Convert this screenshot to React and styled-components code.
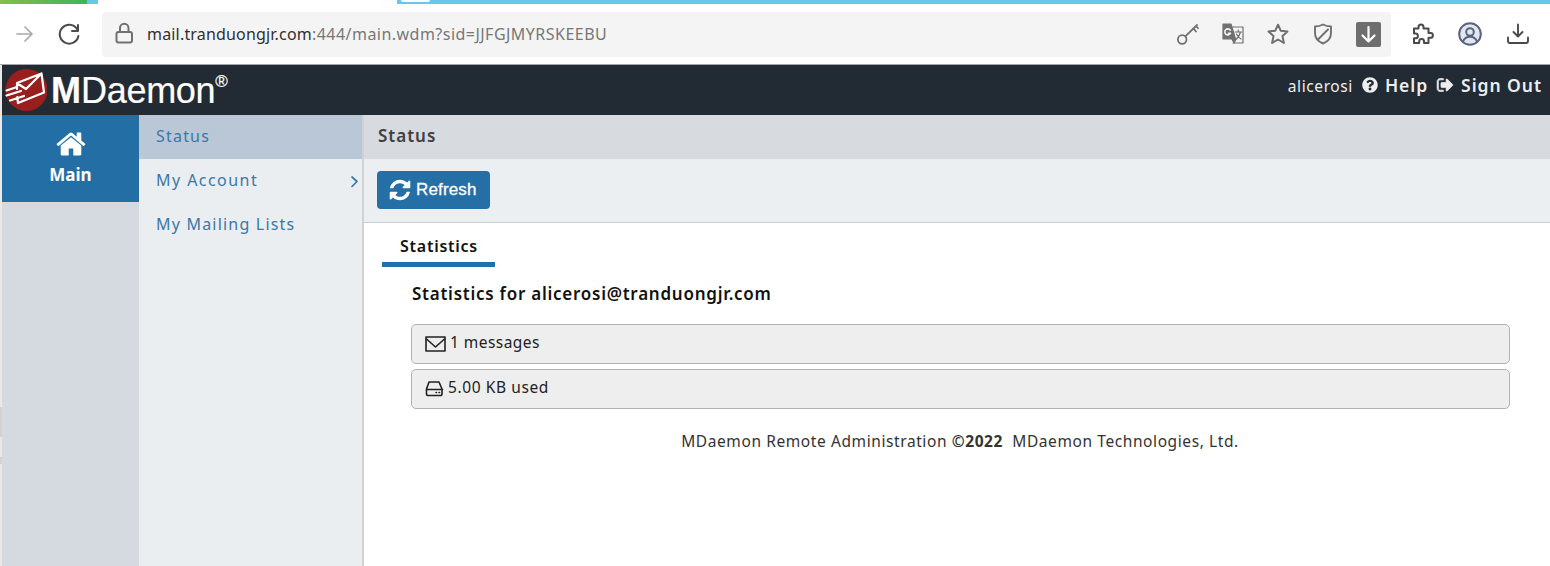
import React from "react";
import styled, { createGlobalStyle } from "styled-components";
import { FaQuestionCircle } from "react-icons/fa";

const GlobalStyle = createGlobalStyle`
  * { box-sizing: border-box; }
  html, body { margin: 0; padding: 0; background: #fff; overflow: hidden; }
  body { font-family: "Noto Sans", "Open Sans", sans-serif; }
`;

const Window = styled.div`
  width: 1550px;
  height: 566px;
  display: flex;
  flex-direction: column;
  overflow: hidden;
`;

const TabStrip = styled.div`
  height: 4px;
  display: flex;
  background: #68c8ea;
  flex: none;
`;
const GreenTheme = styled.div`
  width: 87px;
  background: linear-gradient(90deg, #86bd4a, #3eb45c);
`;
const ActiveTab = styled.div`
  width: 299px;
  margin-left: 11px;
  background: #fff;
`;
const NextTab = styled.div`
  width: 29px;
  height: 2px;
  margin-left: 4px;
  border-radius: 0 0 3px 3px;
  background: #fff;
`;

const BrowserBar = styled.div`
  height: 61px;
  flex: none;
  display: flex;
  align-items: flex-start;
  padding: 8px 18px 0 14px;
  border-bottom: 1px solid #a3a6a8;
  color: #4a4a4a;
`;
const NavIcons = styled.div`
  display: flex;
  align-items: center;
  height: 44px;
  gap: 23px;
  width: 88px;
`;
const AddressBar = styled.div`
  display: flex;
  align-items: center;
  width: 1289px;
  height: 45px;
  padding: 0 10px 1px 12px;
  border-radius: 4px;
  background: #f4f4f4;
  color: #707070;
`;
const Url = styled.div`
  flex: 1;
  padding-left: 13px;
  font-size: 16px;
  letter-spacing: 0.47px;
  line-height: 24px;
  white-space: nowrap;
  color: #777;
  b { font-weight: 400; color: #303030; letter-spacing: 0.18px; }
`;
const AddressActions = styled.div`
  display: flex;
  align-items: center;
  gap: 21px;
`;
const BarActions = styled.div`
  display: flex;
  align-items: center;
  height: 44px;
  margin-left: 20px;
  gap: 22px;
`;
const Glyph = styled.svg`
  display: block;
  flex: none;
  width: ${(p) => p.$w || 24}px;
  height: ${(p) => p.$h || p.$w || 24}px;
  fill: none;
  stroke: currentColor;
  stroke-width: ${(p) => p.$stroke || 1.7};
  stroke-linecap: round;
  stroke-linejoin: round;
`;
const Solid = styled.svg`
  display: block;
  flex: none;
  width: ${(p) => p.$w}px;
  height: ${(p) => p.$w}px;
  fill: currentColor;
`;

const Page = styled.div`
  flex: 1;
  min-height: 0;
  display: flex;
  flex-direction: column;
  padding-left: 2px;
  background: linear-gradient(
    #e9e9e7 342px, #d3d4d2 342px 372px,
    #e9e9e7 372px 392px, #d3d4d2 392px 399px, #e9e9e7 399px
  );
`;
const Header = styled.header`
  height: 50px;
  flex: none;
  display: flex;
  justify-content: space-between;
  background: #222b34;
  color: #fff;
  padding: 0 8px 0 2px;
`;
const Brand = styled.div`
  display: flex;
  align-items: center;
`;
const BrandName = styled.div`
  display: flex;
  font-family: "Liberation Sans", Arial, sans-serif;
  font-size: 36px;
  line-height: 40px;
  letter-spacing: -0.3px;
  margin-left: 4px;
  padding-top: 2px;
  -webkit-text-stroke: 0.2px #fff;
  b { letter-spacing: 0; }
  sup { font-size: 17px; line-height: 16px; padding-top: 3px; vertical-align: top; }
`;
const UserMenu = styled.nav`
  display: flex;
  align-items: center;
  height: 40px;
  color: #eee;
`;
const UserName = styled.span`
  font-size: 15.5px;
  letter-spacing: 0.6px;
  padding-top: 2px;
  margin-right: 9px;
`;
const UserLink = styled.span`
  font-size: 17.5px;
  font-weight: 600;
  letter-spacing: 0.95px;
  margin: 0 ${(p) => p.$after || 0}px 0 7px;
`;

const Body = styled.div`
  flex: 1;
  display: flex;
  min-height: 0;
`;
const Rail = styled.aside`
  width: 137px;
  background: #d5dae1;
`;
const RailItem = styled.div`
  height: 87px;
  background: #236fa5;
  color: #fff;
  display: flex;
  flex-direction: column;
  align-items: center;
  padding-top: 13px;
  font-size: 17px;
  font-weight: 700;
  line-height: 24px;
  gap: 3px;
`;
const Submenu = styled.aside`
  width: 225px;
  background: #ebeef1;
  border-right: 2px solid #d0d2d5;
`;
const SubItem = styled.div`
  height: 44px;
  display: flex;
  justify-content: space-between;
  padding: 8px 3px 0 17px;
  line-height: 26px;
  font-size: 16px;
  letter-spacing: ${(p) => p.$track || "1.2px"};
  color: #3b77a8;
  background: ${(p) => (p.$active ? "#bac7d6" : "transparent")};
  svg { margin-top: 7px; }
`;
const Main = styled.main`
  flex: 1;
  background: #fff;
`;
const Title = styled.h1`
  margin: 0;
  height: 44px;
  padding: 8px 14px;
  font-size: 17px;
  line-height: 26px;
  font-weight: 600;
  letter-spacing: 1px;
  color: #404040;
  background: #d7dade;
`;
const Toolbar = styled.div`
  height: 64px;
  padding: 12px 13px;
  background: #ebeff2;
  border-bottom: 1px solid #cbced0;
`;
const Button = styled.button`
  display: flex;
  align-items: center;
  gap: 4px;
  width: 113px;
  height: 38px;
  padding: 0 0 1px 11px;
  border: 0;
  border-radius: 4px;
  background: #246fa5;
  color: #fff;
  font-family: "Liberation Sans", Arial, sans-serif;
  font-size: 17px;
  line-height: 24px;
  -webkit-text-stroke: 0.3px #fff;
  span { padding-top: 1px; letter-spacing: 0.15px; }
`;
const Tabs = styled.div`
  height: 44px;
  padding-left: 18px;
  display: flex;
`;
const Tab = styled.div`
  width: 113px;
  height: 44px;
  padding: 11px 0 0 1px;
  border-bottom: 5px solid #246fa5;
  text-align: center;
  font-size: 16px;
  line-height: 24px;
  font-weight: 600;
  letter-spacing: 0.75px;
  color: #111;
`;
const Content = styled.section`
  padding: 14px 40px 0 47px;
`;
const Heading = styled.h2`
  margin: 0 0 18px 1px;
  font-size: 17px;
  line-height: 25px;
  font-weight: 600;
  letter-spacing: 0.75px;
  color: #111;
`;
const Stat = styled.div`
  display: flex;
  height: 40px;
  margin-bottom: 5px;
  padding: 5px 13px;
  border: 1px solid #b0b3b5;
  border-radius: 5px;
  background: #eee;
  color: #222;
  gap: ${(p) => p.$gap}px;
  font-size: 15.5px;
  line-height: 25px;
  letter-spacing: ${(p) => p.$track}px;
  svg { margin-top: 5px; }
`;
const Footer = styled.footer`
  margin-top: 20px;
  padding-right: 1px;
  text-align: center;
  font-size: 15.5px;
  line-height: 24px;
  letter-spacing: 0.59px;
  white-space: pre;
  color: #333;
`;

const HomeIcon = () => (
  <Solid $w={32} viewBox="0 0 1664 1792"><path d="M1408 992v480q0 26-19 45t-45 19H960v-384H704v384H320q-26 0-45-19t-19-45V992q0-1 .5-3t.5-3l575-474 575 474q1 2 1 6zm223-69l-62 74q-8 9-21 11h-3q-13 0-21-7L832 424l-692 577q-12 8-24 7-13-2-21-11l-62-74q-8-10-7-23.5T37 878l719-599q32-26 76-26t76 26l244 204V288q0-14 9-23t23-9h192q14 0 23 9t9 23v408l219 182q10 8 11 21.5t-7 23.5z" /></Solid>
);
const RefreshIcon = () => (
  <Solid $w={24} viewBox="0 0 1792 1792"><path d="M1639 1056q0 5-1 7-64 268-268 434.5T892 1664q-146 0-282.5-55T366 1452l-129 129q-19 19-45 19t-45-19-19-45v-448q0-26 19-45t45-19h448q26 0 45 19t19 45-19 45l-137 137q71 66 161 102t187 36q134 0 250-65t186-179q11-17 53-117 8-23 30-23h192q13 0 22.5 9.5t9.5 22.5zm25-800v448q0 26-19 45t-45 19h-448q-26 0-45-19t-19-45 19-45l138-138q-148-137-349-137-134 0-250 65T460 628q-11 17-53 117-8 23-30 23H178q-13 0-22.5-9.5T146 736v-7q65-268 270-434.5T896 128q146 0 284 55.5T1425 340l130-129q19-19 45-19t45 19 19 45z" /></Solid>
);
const SignOutIcon = () => (
  <Solid $w={18} viewBox="0 0 1696 1792" stroke="currentColor" strokeWidth="70"><path d="M704 1440q0 4 1 20t.5 26.5-3 23.5-10 19.5-20.5 6.5h-320q-119 0-203.5-84.5T64 1248V544q0-119 84.5-203.5T352 256h320q13 0 22.5 9.5T704 288q0 4 1 20t.5 26.5-3 23.5-10 19.5T672 384H352q-66 0-113 47t-47 113v704q0 66 47 113t113 47h312l11.5 1 11.5 3 8 5.5 7 9 2 13.5zm928-544q0 26-19 45l-544 544q-19 19-45 19t-45-19-19-45v-288H512q-26 0-45-19t-19-45V704q0-26 19-45t45-19h448V352q0-26 19-45t45-19 45 19l544 544q19 19 19 45z" /></Solid>
);
const BrandMark = () => (
  <Glyph $w={43} $h={44} viewBox="0 0 43 44" $stroke={2.2}>
    <circle cx="22.5" cy="22" r="21" fill="#991e1e" stroke="none" />
    <path d="M13 21v-6L37.5 5.5 40 24.5 14 35l-.7-6M13.5 15.500 22 21 37.5 5.5M2.500 22.500l9-3M2.500 27.500 17 23M6 32.500l14-4.500" />
  </Glyph>
);

export default function App() {
  return (
    <>
      <GlobalStyle />
      <Window>
        <TabStrip><GreenTheme /><ActiveTab /><NextTab /></TabStrip>
        <BrowserBar>
          <NavIcons>
            <Glyph $w={20} viewBox="0 0 20 20" color="#a9a9a9"><path d="M3 10h15M11 3l7 7-7 7" /></Glyph>
            <Glyph $w={24} viewBox="0 0 24 24" $stroke={2}><path d="M20 7a9.4 9.4 0 1 0 1.4 7M21 3v6h-6" /></Glyph>
          </NavIcons>
          <AddressBar>
            <Glyph $w={20} $h={24} viewBox="0 0 20 24" $stroke={2}><rect x="2.5" y="10" width="15.5" height="10.5" rx="2" /><path d="M6 10V6a4.250 4.250 0 0 1 8.500 0v4" /></Glyph>
            <Url><b>mail.tranduongjr.com</b>:444/main.wdm?sid=JJFGJMYRSKEEBU</Url>
            <AddressActions>
              <Glyph viewBox="0 0 24 24" $stroke={1.8}><circle cx="6.2" cy="17.5" r="4.3" /><path d="M9.300 14.400 21 3M17.500 6.500l2.500 3M20 4l2 2.200" /></Glyph>
              <Glyph viewBox="0 0 24 24" $stroke={1.2}>
                <path d="M11 5h11v16H12" />
                <path d="M2 2h8l4.500 15H2z" fill="currentColor" />
                <path d="m11 17 2 4 2-4z" fill="currentColor" />
                <path d="M9.300 8.200a3 3 0 1 0 .2 3H7.400" stroke="#f4f4f4" strokeWidth="1.6" />
                <path d="M14 10h6.500M17.300 8v2M19.500 10c-1 4-2 5-4 7M15.500 12c1 2 2.500 4 4.500 5" />
              </Glyph>
              <Glyph viewBox="0 0 24 24" $stroke={2}><path d="m12 2.700 2.700 6 6.800.8-5 4.600 1.400 6.800-5.900-3.400-5.900 3.400 1.400-6.800-5-4.600 6.800-.8z" /></Glyph>
              <Glyph viewBox="0 0 24 24" $stroke={1.9}><path d="M12 2.500c2.500 1.400 5 2 8 2V11c0 5-3 8.500-8 10.500C7 19.500 4 16 4 11V4.500c3 0 5.500-.6 8-2zM17 7.500 7.500 17" /></Glyph>
              <Glyph $w={25} viewBox="0 0 25 25" $stroke={2.2}><rect width="25" height="25" rx="2" fill="#6e6e6e" stroke="none" /><path d="M12.500 5v14.500M6.500 13.500l6 6 6-6" stroke="#fff" /></Glyph>
            </AddressActions>
          </AddressBar>
          <BarActions>
            <Glyph viewBox="0 0 24 24" $stroke={2}><path d="M3 6.500h4.500V5a2.500 2.500 0 0 1 5 0v1.500H17.500v4.500h2a2.300 2.300 0 0 1 0 4.800h-2V21h-4.500v-1.500a2.400 2.400 0 0 0-4.800 0V21H3v-4.700h1.500a2.400 2.400 0 0 0 0-4.800H3z" /></Glyph>
            <Glyph $w={26} viewBox="0 0 26 26" color="#59647f" $stroke={2}><circle cx="13" cy="13" r="10.8" fill="#e1e6f0" /><circle cx="13" cy="11" r="3.8" /><path d="M6 20.500c1.500-3.500 3.500-4.700 7-4.700s5.500 1.200 7 4.700" /></Glyph>
            <Glyph viewBox="0 0 24 24" $stroke={1.9}><path d="M13 2.500v12M8.500 10 13 14.500l4.500-4.500M3 15.500V19a2 2 0 0 0 2 2h16a2 2 0 0 0 2-2v-3.500" /></Glyph>
          </BarActions>
        </BrowserBar>
        <Page>
          <Header>
            <Brand><BrandMark /><BrandName><b>M</b>Daemon<sup>®</sup></BrandName></Brand>
            <UserMenu>
              <UserName>alicerosi</UserName>
              <FaQuestionCircle size={16} />
              <UserLink $after={8}>Help</UserLink>
              <SignOutIcon />
              <UserLink>Sign Out</UserLink>
            </UserMenu>
          </Header>
          <Body>
            <Rail><RailItem><HomeIcon />Main</RailItem></Rail>
            <Submenu>
              <SubItem $active>Status</SubItem>
              <SubItem $track="1.45px">My Account<Glyph $w={10} $h={14} viewBox="0 0 10 14" $stroke={1.7}><path d="m3 3 5 4.500-5 5" /></Glyph></SubItem>
              <SubItem>My Mailing Lists</SubItem>
            </Submenu>
            <Main>
              <Title>Status</Title>
              <Toolbar><Button><RefreshIcon /><span>Refresh</span></Button></Toolbar>
              <Tabs><Tab>Statistics</Tab></Tabs>
              <Content>
                <Heading>Statistics for alicerosi@tranduongjr.com</Heading>
                <Stat $gap={3} $track={0.45}><Glyph $w={22} $h={18} viewBox="0 0 22 18" $stroke={1.6}><rect x="1" y="2" width="19" height="14" /><path d="m1.500 4 9 8 9-8" /></Glyph>1 messages</Stat>
                <Stat $gap={4} $track={0.6}><Glyph $w={19} $h={18} viewBox="0 0 19 18" $stroke={1.6}><path d="M1.500 9 4 2h10l3 7v5a1.500 1.500 0 0 1-1.500 1.500H3a1.500 1.500 0 0 1-1.500-1.500zM1.500 9.500h16M11 12.500h.5M14 12.500h.5" /></Glyph>5.00 KB used</Stat>
                <Footer>MDaemon Remote Administration <b>©2022</b>{"  "}MDaemon Technologies, Ltd.</Footer>
              </Content>
            </Main>
          </Body>
        </Page>
      </Window>
    </>
  );
}
